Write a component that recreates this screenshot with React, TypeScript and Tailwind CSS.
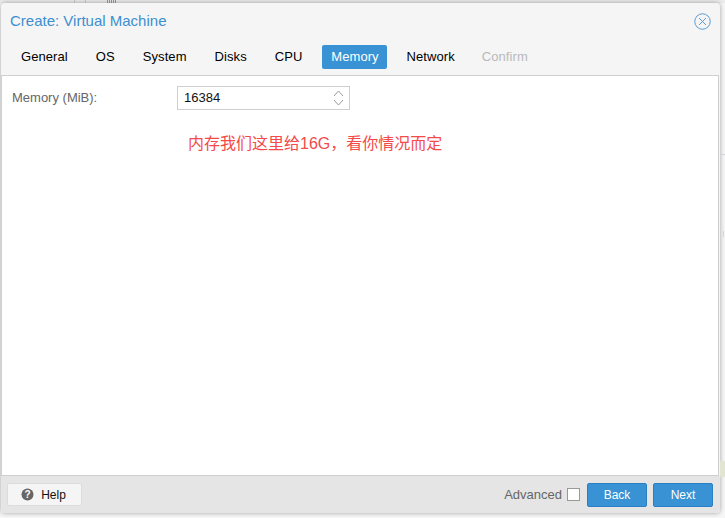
const tabs = ['General', 'OS', 'System', 'Disks', 'CPU', 'Memory', 'Network', 'Confirm'];

function Tab({ name }: { name: string }) {
  if (name === 'Memory') {
    return <div className="h-6 w-[65px] ml-px flex items-center justify-center rounded-[2px] bg-[#3892d4] text-white">{name}</div>;
  }
  if (name === 'Confirm') {
    return <div className="h-6 px-[9px] -ml-px flex items-center text-[#b9b9b9]">{name}</div>;
  }
  return <div className="h-6 px-[9px] flex items-center text-black">{name}</div>;
}

export default function App() {
  return (
    <div className="w-[725px] h-[518px] overflow-hidden bg-[#f7f7f7] font-['Liberation_Sans','Noto_Sans_CJK_SC',sans-serif] text-[13px]">
      {/* bits of the page behind the dialog */}
      <div className="h-[3px] flex items-start bg-[#ececec]">
        <div className="w-px h-[3px] ml-[74px] bg-[#cfcfcf]" />
        <div className="w-px h-[3px] ml-[10px] bg-[#cfcfcf]" />
        <div className="flex gap-px ml-[21px]">
          <div className="w-px h-[3px] bg-[#999]" />
          <div className="w-px h-[3px] bg-[#999]" />
          <div className="w-px h-[3px] bg-[#999]" />
          <div className="w-px h-[3px] bg-[#999]" />
          <div className="w-px h-[3px] bg-[#999]" />
        </div>
      </div>
      <div className="flex pl-px">
        <div className="w-[719px] h-[510px] shrink-0 flex flex-col rounded-[4px] bg-[#f5f5f5] overflow-hidden shadow-[0_0_5px_rgba(0,0,0,0.35)]">
          <div className="h-[72px] shrink-0 flex flex-col">
            <div className="h-[36px] pl-[9px] pr-[9px] flex items-center justify-between">
              <span className="text-[15px] text-[#3c8fd0]">Create: Virtual Machine</span>
              <svg width="17" height="17" viewBox="0 0 17 17" fill="none" stroke="#5b9bd1" strokeWidth="1">
                <circle cx="8.5" cy="8.5" r="7.75" />
                <path d="M5 5l7 7M12 5l-7 7" />
              </svg>
            </div>
            <div className="flex items-center gap-[10px] pl-[11px] pt-[6px] tracking-[0.08px]">
              {tabs.map((t) => (
                <Tab key={t} name={t} />
              ))}
            </div>
          </div>
          <div className="flex-1 mr-px bg-white border border-[#cfcfcf] pl-[10px] pt-[10px]">
            <div className="flex items-center h-[24px]">
              <span className="w-[165px] text-[#666]">Memory (MiB):</span>
              <div className="w-[173px] h-[24px] flex items-center justify-between border border-[#cfcfcf] pl-[6px] pr-[5px] text-[#111]">
                <span>16384</span>
                <svg width="11" height="16" viewBox="0 0 11 16" fill="none" stroke="#999" strokeWidth="1">
                  <path d="M1 6l4.5-5 4.5 5M1 10l4.5 5 4.5-5" />
                </svg>
              </div>
            </div>
            <div className="mt-[23px] ml-[176px] text-[16px] leading-[22px] text-[#f44a4a]">内存我们这里给16G，看你情况而定</div>
          </div>
          <div className="h-[37px] shrink-0 bg-[#e5e5e5] flex items-center justify-between pl-[6px] pr-[7px]">
            <div className="w-[75px] h-[23px] flex items-center justify-center gap-[7px] pr-[2px] rounded-[2px] border border-[#dcdcdc] bg-[#f5f5f5] text-[12px] text-[#111]">
              <svg width="13" height="13" viewBox="0 0 13 13">
                <circle cx="6.5" cy="6.5" r="6" fill="#666" />
                <text x="6.5" y="10" textAnchor="middle" fontSize="10" fontWeight="700" fill="#fff">?</text>
              </svg>
              Help
            </div>
            <div className="flex items-center">
              <span className="text-[#666] mr-[5px]">Advanced</span>
              <div className="w-[13px] h-[13px] border border-[#999] bg-white mr-[7px]" />
              <div className="w-[60px] h-[24px] flex items-center justify-center rounded-[2px] bg-[#3892d4] border border-[#2a80c2] text-white text-[12px]">Back</div>
              <div className="w-[60px] h-[24px] ml-[6px] flex items-center justify-center rounded-[2px] bg-[#3892d4] border border-[#2a80c2] text-white text-[12px]">Next</div>
            </div>
          </div>
        </div>
        <div className="w-[5px] shrink-0 flex flex-col">
          <div className="h-px mt-[151px] bg-[#d5d0d8]" />
          <div className="w-px h-[6px] mt-[76px] ml-[3px] bg-[#d8d4da]" />
          <div className="h-[16px] mt-[224px] bg-[#e3e5d3]" />
        </div>
      </div>
    </div>
  );
}
